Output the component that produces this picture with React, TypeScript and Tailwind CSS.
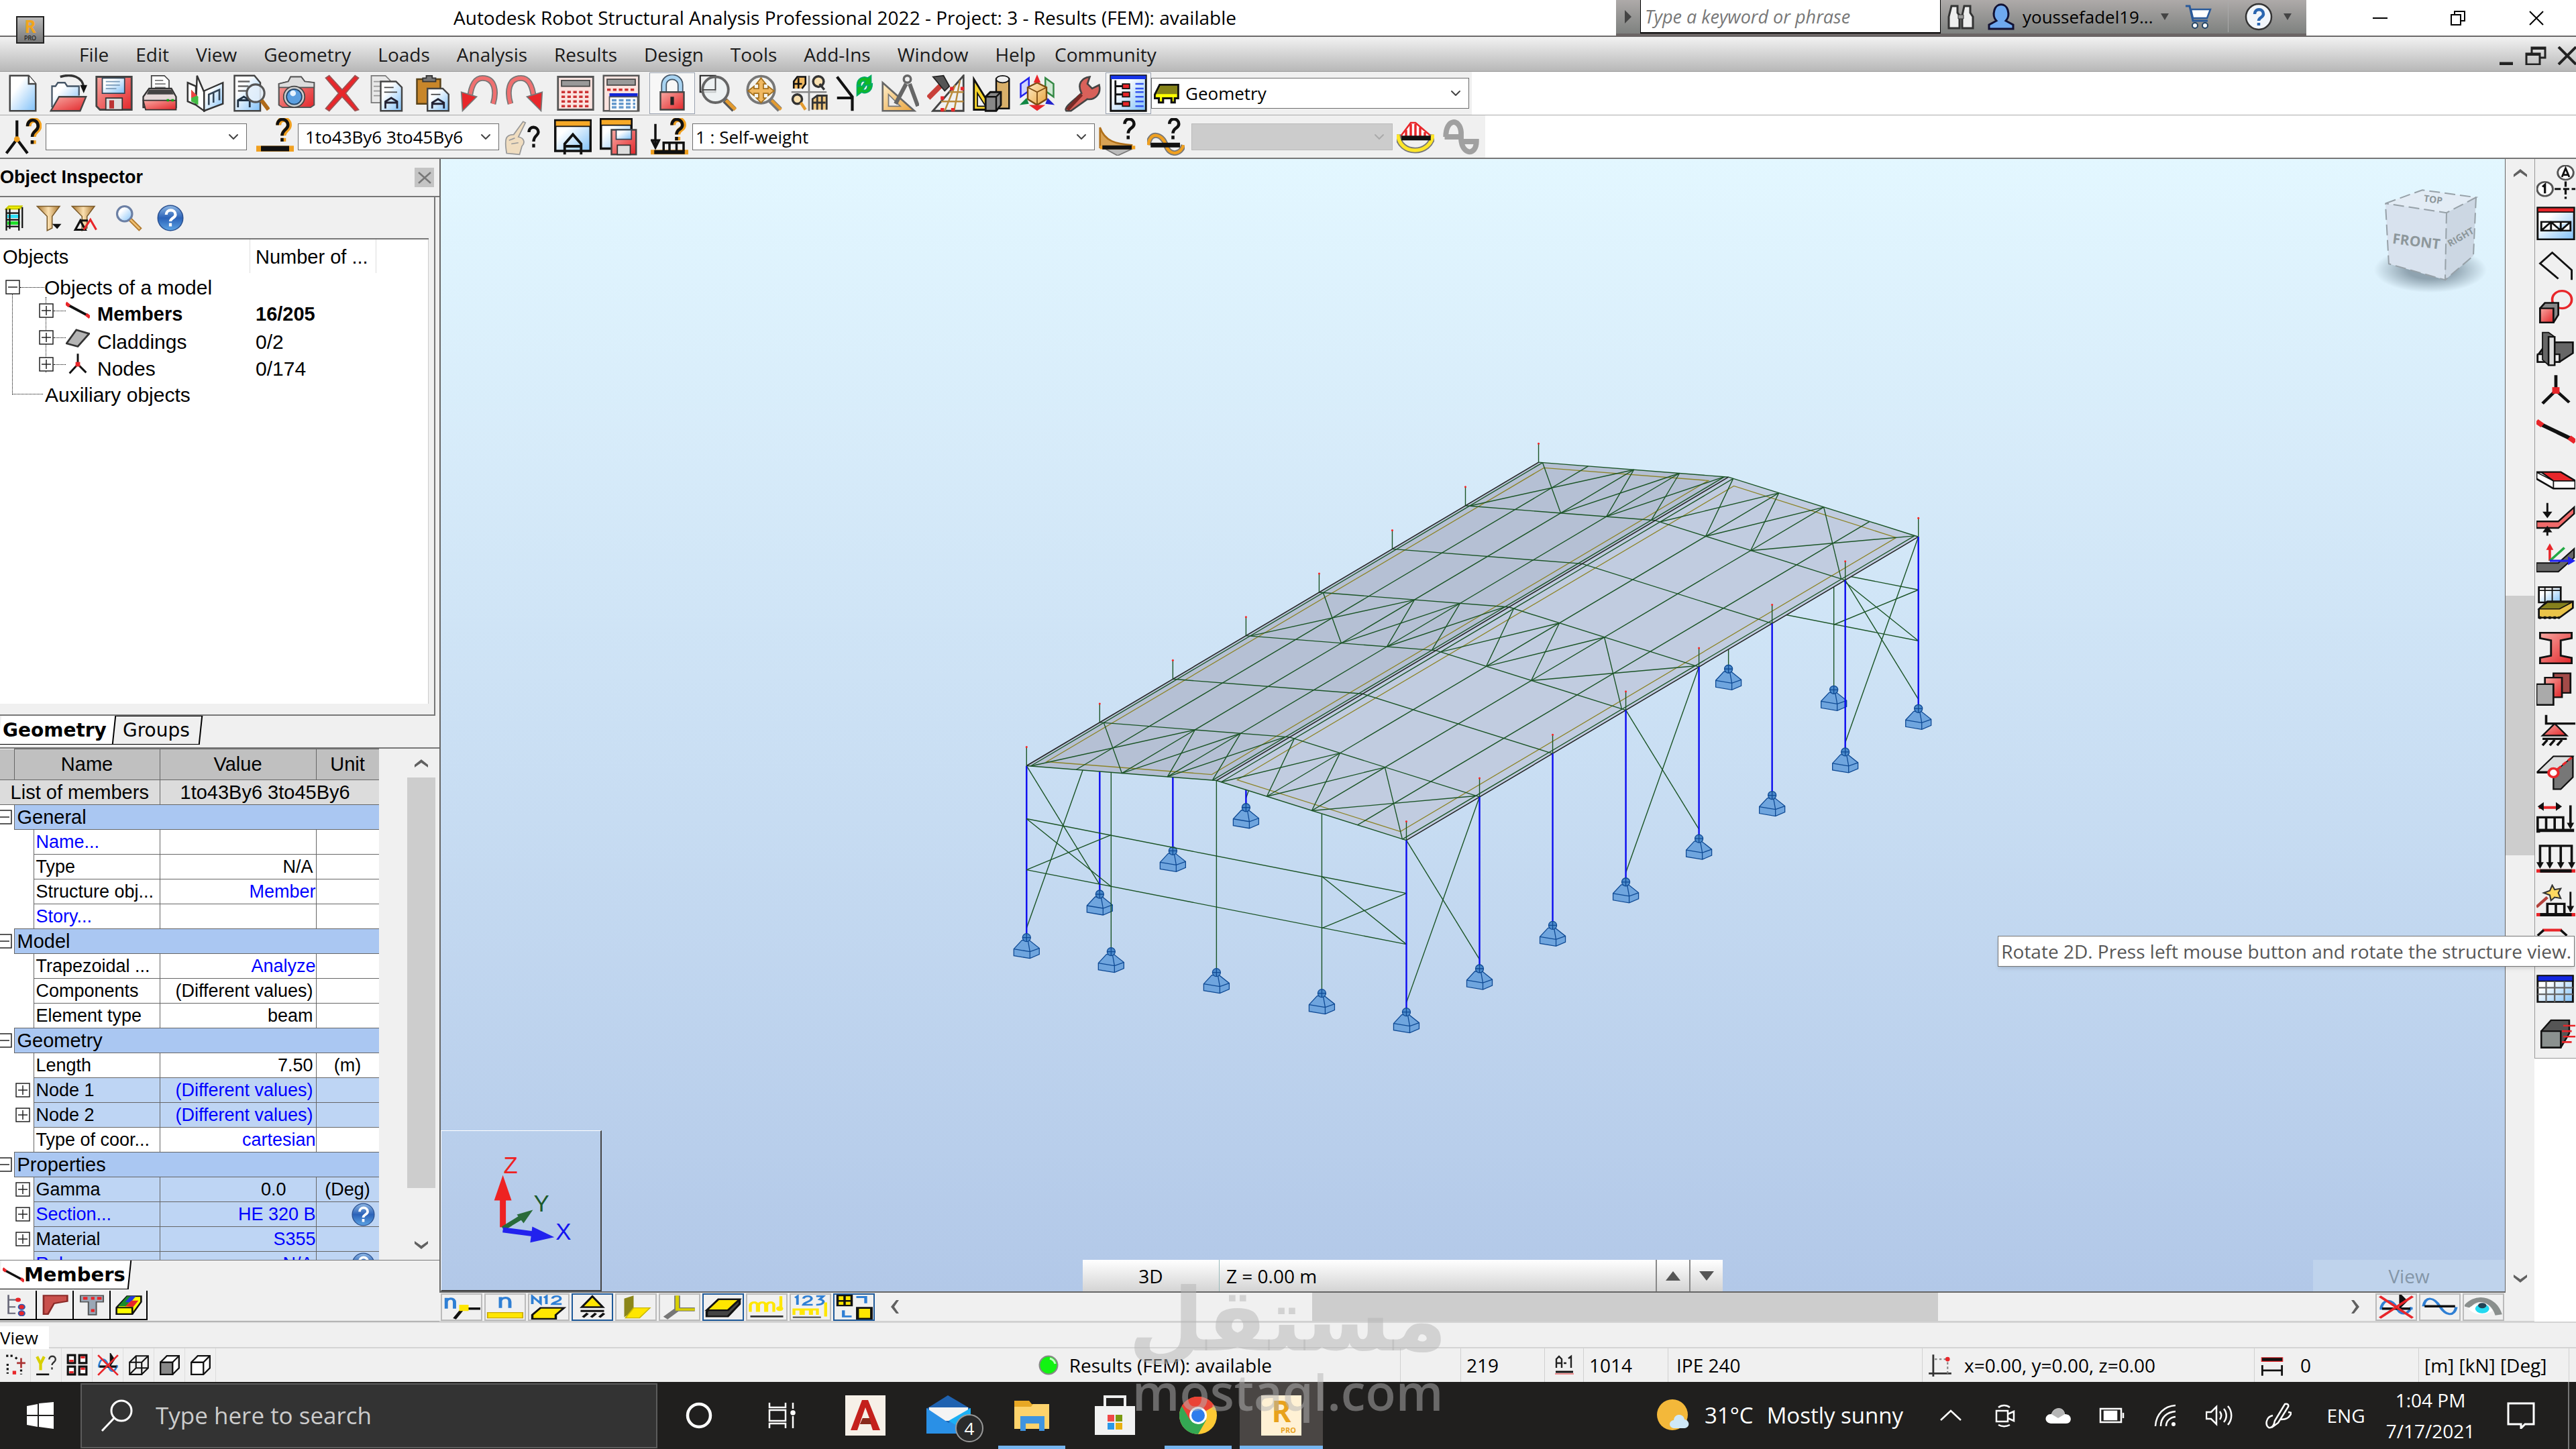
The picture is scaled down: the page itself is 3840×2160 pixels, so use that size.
import React from 'react';
import { ChevronDown } from 'lucide-react';

const K = '#111';
const R = '#e8262a';

const ICONS: Record<string, React.ReactNode> = {
  file: <><path d="M5 1h16l6 7v23H5z" fill="url(#gB)" stroke="#444" strokeWidth="1.4" /><path d="M21 1v7h6" fill="#fff" stroke="#444" strokeWidth="1.4" /></>,
  open: <><path d="M2 28V10h3l2-3h6l2 3h10v8" fill="url(#gB)" stroke="#456" strokeWidth="1.3" /><path d="M1 31l7-12h23l-5 12z" fill="url(#gR)" stroke="#444" strokeWidth="1.3" /><path d="M9 2c10-3 19 0 20 9" fill="none" stroke="#333" strokeWidth="2" /><path d="M26 9h6l-3 7z" fill="#111" /></>,
  save: <><path d="M1 2h30v28H4l-3-3z" fill="url(#gR)" stroke="#444" strokeWidth="1.6" /><path d="M6 3h19v13H6z" fill="url(#gB)" stroke="#345" /><path d="M9 6h12M9 9h12M9 12h9" stroke="#7a9ab8" /><path d="M9 20h14v10H9z" fill="#ddd" stroke="#333" /><path d="M12 22h4v7h-4z" fill="#b33" /></>,
  print: <><path d="M9 14V1h11l4 4v9z" fill="#fff" stroke="#444" /><path d="M12 5h7M12 8h9M12 11h9" stroke="#777" /><path d="M2 19l5-7h19l4 7v9H2z" fill="#e6dada" stroke="#333" strokeWidth="1.3" /><path d="M2 22h28v8H4z" fill="url(#gR)" stroke="#333" /><path d="M7 13h19l2 4H5z" fill="#444" /><path d="M22 22h2M26 22h2" stroke="#1a1" strokeWidth="2" /></>,
  book: <><path d="M1 7l7 3v16l-7-3zM8 26l1-25 6 14v16z" fill="#fff" stroke="#333" strokeWidth="1.4" /><path d="M15 14l16-7v18l-16 6z" fill="url(#gB)" stroke="#333" strokeWidth="1.4" /><path d="M4 13l6 6v7l-6-3z" fill="#4b4" /><path d="M4 13l5 5-5 2z" fill="#e44" /><path d="M19 26v-9l9-4v9M23 15v9" fill="none" stroke="#345" strokeWidth="1.5" /></>,
  preview: <><path d="M2 1h17l5 6v24H2z" fill="url(#gB)" stroke="#444" strokeWidth="1.4" /><path d="M5 6h10M5 10h9M5 14h8" stroke="#666" strokeWidth="1.3" /><path d="M5 28v-6l5-3 5 3v6M5 22h10" fill="none" stroke="#234" strokeWidth="1.6" /><circle cx="20" cy="16" r="7.5" fill="#e6f1fa" fillOpacity=".85" stroke="#555" strokeWidth="1.8" /><path d="M25 22l6 8" stroke="#b06a18" strokeWidth="3.4" /></>,
  camera: <><path d="M1 8l8-2 2-4h9l3 4 8 1v19l-3 2H4l-3-2z" fill="url(#gR)" stroke="#555" strokeWidth="1.2" /><path d="M1 8l8-2 2-4h9l3 4 8 1v4H1z" fill="#ddd" stroke="#555" /><circle cx="14" cy="19" r="9" fill="#ccc" stroke="#444" /><circle cx="14" cy="19" r="6.5" fill="#5b9fe0" stroke="#246" /><circle cx="13" cy="16" r="2.5" fill="#e8f4ff" /></>,
  del: <path d="M2 3l3-2 11 12L27 1l3 2-11 13 11 14-3 1-11-12L5 31l-3-2 11-13z" fill={R} stroke="#955" />,
  copy: <><path d="M2 1h12l4 4v19H2z" fill="#e8e8e8" stroke="#777" /><path d="M4 6h8M4 10h8M4 14h6M4 18h6" stroke="#999" /><path d="M10 6h13l5 5v20H10z" fill="url(#gB)" stroke="#444" strokeWidth="1.4" /><path d="M13 11h8M13 15h11" stroke="#444" /><path d="M14 29v-6l5-3 5 3v6M14 24h10" fill="none" stroke="#223" strokeWidth="1.6" /></>,
  paste: <><path d="M2 4h20v21H2z" fill="#c8862a" stroke="#5a4318" strokeWidth="1.4" /><path d="M7 6V3h3V1h5v2h3v3z" fill="#777" stroke="#333" /><path d="M11 12h13l5 5v14H11z" fill="url(#gB)" stroke="#444" strokeWidth="1.4" /><path d="M14 17h8" stroke="#444" /><path d="M15 29v-5l5-3 5 3v5M15 25h10" fill="none" stroke="#223" strokeWidth="1.6" /></>,
  undo: <><path d="M28 25c3-10 2-22-9-22C12 3 9 11 8 21" fill="none" stroke="#777" strokeWidth="5" /><path d="M28 25c3-10 2-22-9-22C12 3 9 11 8 21" fill="none" stroke="#f07070" strokeWidth="3" /><path d="M1 15l13 4L2 31z" fill={R} stroke="#777" /></>,
  redo: <><path d="M4 25C1 15 2 3 13 3c7 0 10 8 11 18" fill="none" stroke="#777" strokeWidth="5" /><path d="M4 25C1 15 2 3 13 3c7 0 10 8 11 18" fill="none" stroke="#f07070" strokeWidth="3" /><path d="M31 15l-13 4 12 12z" fill={R} stroke="#777" /></>,
  calc: <><path d="M1 2h30v28H1z" fill="#fbe3df" stroke="#555" strokeWidth="1.6" /><path d="M4 5h24v5H4z" fill="#999" stroke="#444" /><path d="M4 15h24M4 19h24M4 23h24M4 27h24" stroke="#c33" strokeWidth="2" strokeDasharray="3 2" /></>,
  calc2: <><path d="M1 1h30v30H1z" fill="#fbe3df" stroke="#555" strokeWidth="1.4" /><path d="M4 4h24v5H4z" fill="#999" stroke="#444" /><path d="M4 13h24" stroke="#c33" strokeWidth="2" strokeDasharray="3 2" /><path d="M6 16h24v3H6z" fill="#1226d8" /><path d="M6 19h24v12H6z" fill="#fff" stroke="#555" /><path d="M8 22h20M8 25h20M8 28h20" stroke="#69c" strokeWidth="2" strokeDasharray="4 2" /></>,
  lock: <><path d="M9 15V9c0-9 14-9 14 0v6" fill="none" stroke="#456" strokeWidth="5" /><path d="M9 15V9c0-9 14-9 14 0v6" fill="none" stroke="#a9d4f2" strokeWidth="3" /><path d="M6 15h20v15H6z" fill="url(#gR)" stroke="#444" strokeWidth="1.4" /><path d="M16 19v7" stroke="#222" strokeWidth="3" /></>,
  zoom: <><path d="M1 1h13v14H1z" fill="none" stroke="#222" strokeWidth="1.2" /><circle cx="14" cy="13" r="11" fill="#eef2f4" fillOpacity=".8" stroke="#666" strokeWidth="2.2" /><path d="M14 3v10H3" stroke="#444" fill="none" /><path d="M22 22l8 8" stroke="#555" strokeWidth="5" /><path d="M23 22l8 8" stroke="#e39b30" strokeWidth="3" /></>,
  pan: <><circle cx="14" cy="13" r="11.5" fill="#f4f4f0" stroke="#777" strokeWidth="2.2" /><path d="M14 3l4 5h-2v4h4v-2l5 4-5 4v-2h-4v4h2l-4 4-4-4h2v-4H8v2l-5-4 5-4v2h4V8h-2z" fill="#f0b860" stroke="#a4701c" /><path d="M22 22l8 8" stroke="#777" strokeWidth="5" /><path d="M23 22l8 8" stroke="#e39b30" strokeWidth="2.5" /></>,
  views: <><path d="M16 1v30M1 15h30" stroke="#888" strokeWidth="1.5" /><path d="M3 12V6l3-4h7v6l-3 4M3 8h7M7 3v9" fill="#f0b860" stroke={K} strokeWidth="1.5" /><circle cx="24" cy="6" r="4.500" fill="#f8e0b0" stroke="#333" strokeWidth="2" /><path d="M25 8l4 5" stroke="#333" strokeWidth="2" /><circle cx="6" cy="21" r="4" fill="#f8e0b0" stroke="#333" strokeWidth="2" /><path d="M9 24l4 6" stroke="#e39b30" strokeWidth="2.5" /><path d="M19 30V21l4-3h8v12M19 24h11M23 18v12M27 18v12" fill="#f0c880" stroke="#333" strokeWidth="1.600" /></>,
  redraw: <><path d="M1 2l13 17v12M1 20h13" fill="none" stroke={K} strokeWidth="2.4" /><path d="M18 9c0-6 6-8 9-6l3-2v8h-7l2-3c-2-1-4 0-4 3zM31 8c0 7-6 9-9 7l-4 3V10h7l-2 3c2 1 4 0 4-3z" fill="#12b824" stroke="#0a6" /></>,
  compass: <><path d="M1 7v24h27z" fill="url(#gY)" stroke="#666" strokeWidth="1.5" /><path d="M6 17v10h10z" fill="#eee" stroke="#777" /><circle cx="22" cy="4" r="3" fill="none" stroke="#666" strokeWidth="2" /><path d="M21 8L12 25M24 8l7 19" stroke="#666" strokeWidth="3.4" /></>,
  hammer: <><path d="M5 31L31 1v30z" fill="none" stroke="#444" strokeWidth="1.6" /><path d="M12 23h19M19 15h12M15 31l9-22M23 31l5-26" stroke="#b98a3a" strokeWidth="1.4" /><path d="M1 20L12 9" stroke="#c9403a" strokeWidth="4.5" /><path d="M5 2l9-1 5 9-4 4z" fill="#555" stroke="#222" /><path d="M12 19h2v2h-2zM20 11h2v2h-2zM29 11h2v2h-2zM12 29h2v2h-2zM21 29h2v2h-2z" fill={R} stroke={R} /></>,
  shapes: <><path d="M1 4l16 26H1z" fill="#f6d52c" stroke={K} strokeWidth="1.6" /><path d="M4 16l7 11H4z" fill="#f0f0f0" stroke={K} /><path d="M20 4v25h11V4z" fill="#d9b06a" stroke={K} strokeWidth="1.4" /><ellipse cx="25.500" cy="4" rx="5.500" ry="3" fill="#eee" stroke={K} /><path d="M11 19l4-4h9v11l-4 5h-9z" fill="#888" stroke={K} strokeWidth="1.6" /><path d="M11 19h9v12M20 19l4-4" fill="none" stroke={K} strokeWidth="1.4" /></>,
  cube: <><path d="M2 8l7-5v11l-7 5z" fill="#cfd4ff" stroke="#22e" strokeWidth="1.4" /><path d="M30 8l-7-5v11l7 5z" fill="#cfe8d4" stroke="#384" strokeWidth="1.4" /><path d="M8 11l8-4 8 4v10l-8 5-8-5z" fill="url(#gY)" stroke="#7a4b10" strokeWidth="1.4" /><path d="M8 11l8 4 8-4M16 15v11" fill="none" stroke="#7a4b10" /><path d="M16 0l3 7h-6zM9 26h14l-7 5z" fill={R} /><path d="M1 26l6-6 2 5z" fill="#184" /><path d="M31 26l-6-6-2 5z" fill="#22c" /></>,
  wrench: <><path d="M2 31c-3-3 9-11 13-15C11 8 15 3 22 2l-2 6 4 4 6-3c2 8-4 13-10 12L6 31z" fill="#d8615a" stroke="#444" strokeWidth="1.5" /><path d="M3 30l12-13" stroke="#7a2a26" strokeWidth="3" /></>,
  inspector: <><path d="M1 1h30v30H1z" fill="url(#gB)" stroke={K} strokeWidth="1.6" /><path d="M1 1h30v3H1z" fill="#1634e8" /><path d="M5 5v20h6M5 10h6M5 17h6" fill="none" stroke={K} strokeWidth="1.6" /><path d="M11 8h6v4h-6zM11 15h6v4h-6zM11 23h6v4h-6z" fill={R} stroke={K} /><path d="M22 8h7M22 12h7M22 15h7M22 19h7M22 23h7M22 27h7" stroke="#35e" strokeWidth="1.5" /></>,
  house: <><path d="M1 18L7 6h22v16h-4v5h-4v-5H11v5H6v-5H1z" fill="#ff0" stroke={K} strokeWidth="2.500" /><path d="M3 17L8 7h20v10z" fill="#86831a" /></>,
  nodeQ: <><path d="M11 2v16L2 30M11 18l9 12" fill="none" stroke={K} strokeWidth="2.4" /><circle cx="11" cy="18" r="2.500" fill="#f0a020" /><path d="M21 7c0-7 9-7 9 0 0 4-5 4-5 9M25 19v3" fill="none" stroke="#f0a020" strokeWidth="4.5" /><path d="M20 7c0-7 9-7 9 0 0 4-5 4-5 9M24 19v3" fill="none" stroke={K} strokeWidth="2.6" /></>,
  barQ: <><path d="M0 26h32" stroke="#f0a020" strokeWidth="5" /><path d="M4 26h24" stroke={K} strokeWidth="4.500" /><path d="M19 6c0-7 9-6 9 0 0 4-5 4-5 9M23 17v3" fill="none" stroke="#f0a020" strokeWidth="4.600" /><path d="M18 6c0-7 9-6 9 0 0 4-5 4-5 9M22 17v3" fill="none" stroke={K} strokeWidth="2.600" /></>,
  handQ: <><path d="M3 30c-2-12-1-16 6-16l8-11 2 1-6 12c5 1 6 5 3 8l-2 7z" fill="#f0ddc0" stroke="#999" /><path d="M5 19l5-2M7 22l6-1" stroke="#999" /><path d="M22 12c0-6 8-5 8 0 0 3-4 3-4 8M26 22v3" fill="none" stroke={K} strokeWidth="2.500" /></>,
  winArch: <><path d="M1 2h30v26H1z" fill="url(#gB)" stroke={K} strokeWidth="2" /><path d="M1 2h30v5H1z" fill="#f6a928" stroke={K} /><path d="M9 31v-9l7-8 7 8v9M9 24h14" fill="none" stroke={K} strokeWidth="2.200" /></>,
  winSave: <><path d="M1 1h26v25H1z" fill="url(#gB)" stroke={K} strokeWidth="2" /><path d="M1 1h26v5H1z" fill="#f6a928" stroke={K} /><path d="M10 10h21v21H10z" fill="url(#gR)" stroke="#444" strokeWidth="1.400" /><path d="M14 10h13v8H14z" fill="url(#gB)" stroke="#345" /><path d="M15 23h11v8H15z" fill="#ddd" stroke="#333" /></>,
  loadQ: <><path d="M0 29h32" stroke="#f0a020" strokeWidth="4" /><path d="M3 29h26" stroke={K} strokeWidth="3.500" /><path d="M4 5v20M1 19l3 6 3-6zM11 28v-7h17v7M16 21v7M22 21v7" fill="none" stroke={K} strokeWidth="2" /><path d="M19 6c0-7 9-6 9 0 0 4-5 3-5 8M23 16v3" fill="none" stroke="#f0a020" strokeWidth="4.500" /><path d="M18 6c0-7 9-6 9 0 0 4-5 3-5 8M22 16v3" fill="none" stroke={K} strokeWidth="2.600" /></>,
  momQ: <><path d="M1 25V8c4 12 14 14 27 15v3z" fill="#d9a253" stroke="#b0701a" strokeWidth="1.500" /><path d="M5 26h24l-13 6z" fill="#bbb" stroke="#777" /><path d="M1 25h30" stroke="#f0a020" strokeWidth="3" /><path d="M3 25h25" stroke={K} strokeWidth="3.500" /><path d="M22 5c0-6 8-5 8 0 0 4-5 3-5 8M25 15v3" fill="none" stroke={K} strokeWidth="2.600" /></>,
  waveQ: <><path d="M1 23c1-12 12-10 15 0s13 8 15 0" fill="none" stroke="#777" strokeWidth="4.500" /><path d="M1 23c1-12 12-10 15 0s13 8 15 0" fill="none" stroke="#f0a020" strokeWidth="2.500" /><path d="M3 23h25" stroke={K} strokeWidth="4" /><path d="M19 5c0-6 8-5 8 0 0 4-5 3-5 8M22 15v3" fill="none" stroke={K} strokeWidth="2.600" /></>,
  diagram: <><path d="M3 16l9-12h4l14 12z" fill="#fff" stroke={R} strokeWidth="1.500" /><path d="M8 10v6M12 5v11M16 5v11M20 8v8M24 12v4" stroke={R} strokeWidth="2" /><path d="M1 14c1 18 28 18 30 0" fill="none" stroke="#777" strokeWidth="5" /><path d="M1 14c1 18 28 18 30 0" fill="none" stroke="#ffe628" strokeWidth="3" /><path d="M4 17h25" stroke={K} strokeWidth="4" /></>,
  waveOff: <path d="M2 16h12M3 16C3 0 15 0 16 12v6c1 14 13 14 13 2H18" fill="none" stroke="#a0a0a0" strokeWidth="4.500" />,
  // side toolbar
  axes: <><circle cx="7" cy="22" r="6.500" fill="#fff" stroke="#555" strokeWidth="1.600" /><path d="M5 20l2-2v8" fill="none" stroke={K} strokeWidth="1.800" /><circle cx="24" cy="7" r="6.500" fill="#fff" stroke="#555" strokeWidth="1.600" /><path d="M21 11l3-8 3 8M22 9h4" fill="none" stroke={K} strokeWidth="1.600" /><path d="M15 22h17M24 15v16" stroke={K} strokeWidth="1.800" strokeDasharray="5 2" /></>,
  truss: <><path d="M1 1h30v29H1z" fill="url(#gB)" stroke={K} strokeWidth="1.600" /><path d="M1 1h30v4H1z" fill={R} stroke={K} /><path d="M4 14h24v8H4zM12 14v8M20 14v8M4 22l8-8 8 8 8-8" fill="#fff" stroke={K} strokeWidth="1.600" /></>,
  poly: <path d="M18 28L3 14 13 4l16 16v9" fill="none" stroke={K} strokeWidth="1.600" />,
  redCube: <><ellipse cx="21" cy="9" rx="8" ry="8" fill="none" stroke={R} strokeWidth="2" /><path d="M3 17l4-5h11v11l-4 7H3z" fill="#888" stroke={K} strokeWidth="1.500" /><path d="M3 17h11v13H3z" fill="url(#gR)" stroke={K} strokeWidth="1.500" /></>,
  column: <><path d="M1 22l8-12h21v10L19 28H1z" fill="#666" stroke={K} strokeWidth="1.500" /><path d="M1 21h18v7H1z" fill="#eee" stroke={K} strokeWidth="1.400" /><path d="M5 1h5l5 4v26h-5l-5-5z" fill="#666" stroke={K} /><path d="M10 5h5v26h-5z" fill="#ddd" stroke={K} strokeWidth="1.400" /></>,
  node: <><path d="M16 2v14L5 28M16 16l11 11" fill="none" stroke={K} strokeWidth="2.600" /><path d="M13 13h6v6h-6z" fill={R} /></>,
  bar: <><path d="M2 8l28 15" stroke={K} strokeWidth="3.500" /><path d="M0 6l5 4M27 21l5 4" stroke={R} strokeWidth="4.500" /></>,
  slab: <><path d="M0 11h20l12 8v7H14L0 17z" fill="#fff" stroke={K} strokeWidth="1.600" /><path d="M4 11h16l12 8H14z" fill={R} stroke={K} strokeWidth="1.200" /><path d="M0 11l14 8v7" fill="none" stroke={K} /></>,
  thick: <><path d="M0 18h18L31 5v6L18 24H0z" fill="#f06a6a" stroke={K} strokeWidth="1.400" /><path d="M9 1v12M9 31v-7" stroke={K} strokeWidth="1.600" /><path d="M5 9h8l-4 6zM5 28h8l-4-6z" fill={K} /></>,
  slabAxes: <><path d="M0 18h18L31 5v8L18 26H0z" fill="#666" stroke={K} strokeWidth="1.200" /><path d="M11 16V3" stroke={R} strokeWidth="2" /><path d="M8 6l3-6 3 6z" fill={R} /><path d="M11 16L23 4" stroke="#2a4" strokeWidth="2" /><path d="M11 16h17" stroke="#22e" strokeWidth="2" /><path d="M26 12l6 4-6 4z" fill="#22e" /></>,
  panel: <><path d="M2 2h18v14H2z" fill="url(#gB)" stroke={K} strokeWidth="1.500" /><path d="M7 2v14M13 2v14M2 5h18" stroke={K} /><path d="M2 22l7-7h21v6L19 30H2z" fill="#e9c349" stroke={K} strokeWidth="1.500" /><path d="M2 22l7-6h20l-10 6z" fill="#85801c" stroke={K} /><path d="M2 30h17" stroke={K} strokeWidth="2.500" strokeDasharray="2 2" /></>,
  beam: <path d="M3 2h26v5l-9 2v14l9 2v5H3v-5l9-2V9L3 7z" fill="url(#gR)" stroke={K} strokeWidth="1.600" />,
  stack: <><path d="M14 1h14v18H14z" fill="#a34a48" stroke={K} strokeWidth="1.500" /><path d="M7 5h14v18H7z" fill="url(#gR)" stroke={K} strokeWidth="1.500" /><path d="M0 11h14v19H0z" fill="#aaa" stroke={K} strokeWidth="1.500" /></>,
  support: <><path d="M8 1v8h24" fill="none" stroke={K} strokeWidth="2" /><path d="M15 9l10 11H5z" fill="url(#gR)" stroke={K} strokeWidth="1.400" /><path d="M5 23h20M5 29l4-5M11 29l4-5M17 29l4-5" stroke={K} strokeWidth="2" /></>,
  release: <><path d="M1 15L14 1h16v19L20 31h-6V16H1z" fill="#777" stroke={K} strokeWidth="1.300" /><path d="M1 15L14 1h16L15 15z" fill="#ddd" stroke={K} /><path d="M29 2L16 14" stroke={R} strokeWidth="2" strokeDasharray="4 2" /><circle cx="14" cy="16" r="4" fill="#fff" stroke={R} strokeWidth="2.200" /></>,
  load1: <><path d="M2 6h17" stroke={R} strokeWidth="2.500" /><path d="M1 5l5-4v8zM21 5l-5-4v8z" fill={K} /><path d="M1 27V15h21v12M8 15v12M15 15v12" fill="none" stroke={K} strokeWidth="2" /><path d="M0 27h31" stroke={K} strokeWidth="3" /><path d="M28 4v20" stroke={K} strokeWidth="2" /><path d="M25 20h6l-3 6zM0 26h3v3H0z" fill={K} /></>,
  load2: <><path d="M3 22V3h26v19M11 3v19M20 3v19" fill="none" stroke={K} strokeWidth="2" /><path d="M0 18h6l-3 6zM8 18h6l-3 6zM17 18h6l-3 6zM26 18h6l-3 6z" fill={K} /><path d="M0 26h32" stroke={R} strokeWidth="3" /><path d="M3 26h26" stroke={K} strokeWidth="3" /></>,
  wizard: <><path d="M0 21l9-9" stroke="#b4423c" strokeWidth="2.500" /><path d="M13 1l2 4 5-1-2 4 2 5-5-1-3 3-1-5-5-2 5-2z" fill="#ffd860" stroke="#333" strokeWidth="1.200" /><path d="M9 27V18h14v9M16 18v9" fill="none" stroke={K} strokeWidth="2" /><path d="M0 28h32" stroke={R} strokeWidth="3" /><path d="M3 28h26" stroke={K} strokeWidth="3" /><path d="M28 7v18" stroke={K} strokeWidth="1.600" /><path d="M25 20h6l-3 6z" fill={K} /></>,
  comb: <><path d="M5 4h16" stroke={R} strokeWidth="2.500" /><path d="M1 9l5-5M20 4l5 5" stroke={K} strokeWidth="2" /></>,
  table: <><path d="M1 4h29v24H1z" fill="url(#gB)" stroke={K} strokeWidth="1.600" /><path d="M1 4h29v5H1z" fill="#1226e0" stroke={K} /><path d="M1 15h29M1 21h29M8 9v19M15 9v19M23 9v19" stroke="#666" strokeWidth="1.300" /></>,
  solid: <><path d="M4 13L12 3h15v12L20 28H4z" fill="#555" stroke={K} strokeWidth="1.400" /><path d="M4 13h16v15H4z" fill="#8b918f" stroke={K} strokeWidth="1.400" /><path d="M22 8h10M21 13h8M22 18h10M21 23h8" stroke={R} strokeWidth="1.600" /></>,
  // inspector strip
  shelf: <><path d="M6 5l3-3h15l-2 3z" fill="#ff0" stroke="#cc0" strokeWidth="2" /><path d="M7 12h15v4H7z" fill="#2ee0f8" /><path d="M7 20h15v4H7z" fill="#1ee02a" /><path d="M6 5v26M10 5v24M21 5v26M25 3v25M6 10h15M6 18h15M6 26h15" stroke={K} strokeWidth="1.800" fill="none" /></>,
  filter: <><path d="M1 2h27l-9 12v14l-6 3V14z" fill="url(#gW)" stroke="#7a5a2a" strokeWidth="1.200" /><path d="M19 23h11l-5 6z" fill={K} /></>,
  filter2: <><path d="M1 2h27l-9 12v14l-6 3V14z" fill="url(#gW)" stroke="#7a5a2a" strokeWidth="1.200" /><path d="M5 30l6-11 6 11zM11 19h9" fill="none" stroke={K} strokeWidth="2.500" /><path d="M15 30l8-12 7 12" fill="none" stroke={R} strokeWidth="2.500" /></>,
  find: <><circle cx="11" cy="11" r="9" fill="url(#gB)" stroke="#6b7fa4" strokeWidth="2.500" /><path d="M18 18l12 12" stroke="#b07a30" strokeWidth="5" /><path d="M18 18l11 11" stroke="#f0c070" strokeWidth="2" /></>,
  help: <><circle cx="16" cy="16" r="15" fill="url(#gQ)" stroke="#2a5090" strokeWidth="1.200" /><path d="M11 12c0-7 11-7 11 0 0 4-6 4-6 8M16 22v4" fill="none" stroke="#fff" strokeWidth="3.400" /></>,
  clad: <path d="M1 24L14 6l17 5-15 17z" fill="#b4b4b4" stroke="#333" strokeWidth="2.400" />,
  tree: <><path d="M5 2v26h8M5 9h10M5 19h8" fill="none" stroke="#667" strokeWidth="2" /><circle cx="16" cy="9" r="3" fill={R} /><circle cx="20" cy="19" r="3.500" fill={R} stroke="#35a" strokeWidth="1.500" /><circle cx="20" cy="28" r="3.500" fill={R} stroke="#35a" strokeWidth="1.500" /></>,
  corner: <path d="M3 3h27v8L15 14 8 29H3z" fill="#c9504c" stroke="#8a2a28" strokeWidth="2" />,
  tee: <><path d="M3 3h26v9h-8v18h-9V12H3z" fill="#9aa7b5" stroke="#555" strokeWidth="1.500" /><path d="M6 7h5M15 7h4M22 7h5M15 24h4" stroke={R} strokeWidth="4" /></>,
  slabs: <><path d="M2 20L14 4h16v8L20 29H2z" fill="#ff0" stroke={K} strokeWidth="2" /><path d="M4 18L14 4h8l-9 14z" fill="#1a8a2a" /><path d="M12 12l6-8h6l-6 9z" fill="#2438e0" /><path d="M12 18l7-8h8l-6 9z" fill={R} /><path d="M2 20h18v9" fill="none" stroke={K} strokeWidth="2" /></>,
  // display toggles
  nNode: <><path d="M16 18h16M16 20l-6 11" stroke={K} strokeWidth="3" /><path d="M14 13h8v8h-8z" fill="#ffe600" /><path d="M3 18V4M3 9c1-5 7-6 7 1v8" fill="none" stroke="#2f7fd4" strokeWidth="2.800" /></>,
  nBar: <><path d="M1 23h30v7H1z" fill="#ffe600" stroke="#c9a800" /><path d="M12 17V3M12 8c1-5 8-6 8 1v8" fill="none" stroke="#2f7fd4" strokeWidth="2.800" /></>,
  n12: <><path d="M2 12V2l7 9V2M12 4l2-2v10M19 5c1-4 7-4 7 0s-6 4-7 7h8" fill="none" stroke="#2f7fd4" strokeWidth="2.200" /><path d="M2 26l7-9h20l-7 9v5H2z" fill="#ffe600" stroke={K} strokeWidth="2" /></>,
  tri: <><path d="M16 2l9 14H7z" fill="#ffe600" stroke={K} strokeWidth="2" /><path d="M6 21h20M8 29l4-5M15 29l4-5M22 29l4-5" stroke={K} strokeWidth="2.500" /></>,
  ell: <><path d="M6 5l8-4v20l-8 8z" fill="#8b861a" /><path d="M7 30l7-13h14l-9 13z" fill="#ffe600" stroke="#c9b800" /></>,
  local: <><path d="M14 1v18L4 30M14 19h15" fill="none" stroke="#777" strokeWidth="5" /><path d="M14 1v18h15" fill="none" stroke="#d8d000" strokeWidth="3" /></>,
  plate: <><path d="M2 22L12 6h18v6L20 28H2z" fill="#444" stroke={K} strokeWidth="2" /><path d="M2 20L12 6h18L20 20z" fill="#ffe600" stroke={K} strokeWidth="2" /></>,
  loads: <><path d="M2 22v-9c1-4 6-4 6 0v9M9 22v-9c1-4 6-4 6 0v9M16 22v-9c1-4 6-4 6 0v9M28 2v18" fill="none" stroke="#ffe600" strokeWidth="2.500" /><path d="M2 28h28" stroke="#333" strokeWidth="2.500" /><circle cx="27" cy="18" r="3" fill="#ffe600" /></>,
  n123: <><path d="M3 4l2-2v11M10 5c1-4 7-4 7 0s-6 4-7 8h8M21 2h6l-3 4c5 1 4 7-3 7" fill="none" stroke="#2f7fd4" strokeWidth="2.200" /><path d="M2 26v-7h6v7M10 26v-7h6v7M17 26v-7h5v7M29 10v18" fill="none" stroke="#ffe600" strokeWidth="2.500" /><path d="M1 29h24" stroke="#555" strokeWidth="2" /></>,
  swap: <><path d="M2 1h12v13H2z" fill="#ffe600" stroke={K} strokeWidth="2" /><path d="M8 1v13M2 8h12" stroke={K} strokeWidth="2" /><path d="M19 17h12v14H19z" fill="#ffe600" stroke={K} strokeWidth="2.500" /><path d="M18 3h8v8M14 28H7v-8" fill="none" stroke="#2f7fd4" strokeWidth="2.500" /></>,
  crossWave: <><path d="M3 18c2-14 10-12 13-2s9 12 13 0M2 18h28" fill="none" stroke="#2f7fd4" strokeWidth="2.500" /><path d="M4 18h24M20 2l4 6-4 6z" stroke={K} strokeWidth="3" /><path d="M2 2l28 28M30 2L2 30" stroke={R} strokeWidth="2.600" /></>,
  wave: <><path d="M2 15c2-14 9-12 14 0s12 14 14 1" fill="none" stroke="#2f7fd4" strokeWidth="2.500" /><path d="M3 15h26" stroke={K} strokeWidth="3" /></>,
  eye: <><path d="M2 16C8 2 24 2 29 26" fill="none" stroke="#8a8f8d" strokeWidth="6" /><path d="M3 18c5-8 15-8 21 2-6 7-15 8-21-2z" fill="#fff" /><circle cx="15" cy="18" r="6" fill="#23d9f0" /><circle cx="15" cy="14" r="3.500" fill="#245" /></>,
  // status bar
  snap: <><path d="M3 3h10M16 5l4 4M5 14v14M24 22v7" stroke={K} strokeWidth="3" strokeDasharray="3 3" /><path d="M24 6v14M18 13h12" stroke="#a33" strokeWidth="2.500" /><path d="M12 24h5v5h-5z" fill={R} /></>,
  vQ: <><path d="M3 4l5 10 5-10M8 14v9" stroke="#d8d000" strokeWidth="4" fill="none" /><path d="M2 29h18" stroke={K} strokeWidth="2.500" /><path d="M20 8c0-6 9-6 9 0 0 4-5 4-5 8M24 19v3" fill="none" stroke="#333" strokeWidth="2.200" /></>,
  four: <><path d="M3 2h10v11H3zM19 2h10v11H19zM3 18h10v11H3zM19 18h10v11H19z" fill="#fff" stroke={K} strokeWidth="3" /><path d="M5 10h6M21 5h6M5 26h6M21 21h6" stroke={R} strokeWidth="3" /></>,
  wire: <path d="M3 12h17v17H3zM3 12l9-9h17v17l-9 9M20 12l9-9M12 3v17h17M12 20l-9 9" fill="none" stroke={K} strokeWidth="2" />,
  shade: <><path d="M3 12l9-9h17v17l-9 9H3z" fill="#fff" stroke={K} strokeWidth="2.200" /><path d="M3 12h17v17H3z" fill="#888" stroke={K} strokeWidth="2.200" /><path d="M20 12l9-9" stroke={K} strokeWidth="2" /></>,
  white: <><path d="M3 12l9-9h17v17l-9 9H3z" fill="#fff" stroke={K} strokeWidth="2.200" /><path d="M3 12h17v17M20 12l9-9" fill="none" stroke={K} strokeWidth="2.200" /></>,
  a1: <><path d="M4 20V7l4-4 4 4v13M4 13h8M15 13h4M22 6l4-3v17" fill="none" stroke="#222" strokeWidth="2.400" /><path d="M3 26h26" stroke={K} strokeWidth="3" /><path d="M2 29h28" stroke={R} /></>,
  coord: <><path d="M7 2v29M1 27h30" stroke="#333" strokeWidth="2.500" /><path d="M9 8h15M26 12v15" stroke="#888" strokeWidth="2" strokeDasharray="3 3" /><circle cx="26" cy="8" r="3" fill={R} /></>,
  dim: <><path d="M2 6h28v5H2z" fill={K} stroke={R} /><path d="M3 16v14M29 16v14M3 23h26" stroke={K} strokeWidth="2.500" /></>,
};

function Ic({ n, c = 'w-14 h-14', fill = false }: { n: string; c?: string; fill?: boolean }) {
  return <svg viewBox="0 0 32 32" preserveAspectRatio={fill ? 'none' : 'xMidYMid'} className={`shrink-0 ${c}`}>{ICONS[n]}</svg>;
}

function Tool({ n, on = false }: { n: string; on?: boolean }) {
  return (
    <button aria-label={n} className={`w-[68px] h-[62px] shrink-0 flex items-center justify-center ${on ? 'border border-gray-400 bg-[#f7f7f7]' : ''}`}>
      <Ic n={n} />
    </button>
  );
}

function Combo({ label, value, w, off = false, pl = 'pl-3', h = 'h-[40px]' }: { label: string; value: string; w: string; off?: boolean; pl?: string; h?: string }) {
  return (
    <div className={`relative flex items-center shrink-0 ${w} ${h}`}>
      <select aria-label={label} disabled={off} className={`appearance-none w-full h-full border text-[26px] text-black ${pl} ${off ? 'bg-[#ccc] border-[#bbb]' : 'bg-white border-[#6d6d6d]'}`}>
        <option>{value}</option>
      </select>
      <ChevronDown className={`absolute right-2 w-6 h-6 pointer-events-none ${off ? 'text-[#aaa]' : 'text-[#444]'}`} strokeWidth={2} />
    </div>
  );
}

function Chevron({ c }: { c: string }) {
  return <svg viewBox="0 0 20 12" className={`w-[20px] h-[12px] ${c}`}><path d="M0 12V8l10-8 10 8v4L10 5z" fill="#606060" /></svg>;
}

const MENU = ['File', 'Edit', 'View', 'Geometry', 'Loads', 'Analysis', 'Results', 'Design', 'Tools', 'Add-Ins', 'Window'];

function TitleBar() {
  return (
    <header className="relative shrink-0">
      <div className="h-[55px] bg-white border-b-2 border-[#6b6969] flex">
        <h1 className="pl-[676px] text-[28px] leading-[52px] text-black whitespace-nowrap">Autodesk Robot Structural Analysis Professional 2022 - Project: 3 - Results (FEM): available</h1>
        <div className="ml-auto w-[1029px] h-[54px] border-b-4 border-[#6b6565] bg-linear-to-b from-[#aeaaa9] to-[#7e817f] flex items-center shrink-0">
          <button aria-label="Collapse" className="w-[36px] flex justify-center text-[#444]">
            <svg viewBox="0 0 10 20" className="w-[10px] h-[20px]"><path d="M0 0l10 10L0 20z" fill="#444" /></svg>
          </button>
          <input aria-label="Search help" placeholder="Type a keyword or phrase" className="w-[448px] h-[50px] bg-white border-x border-b-2 border-black px-1.5 italic text-[27px] placeholder:text-[#777]" />
          <button aria-label="Search" className="ml-2.5">
            <svg viewBox="0 0 40 38" className="w-10 h-[38px]"><path d="M6 3h9v10l3 4v19H2V19zM25 3h9v10l4 6v17H22V17z" fill="#eee" stroke="#333" strokeWidth="3" /><path d="M16 16h8v6h-8z" fill="#999" stroke="#333" /></svg>
          </button>
          <button className="ml-5 flex items-center gap-3 text-[26px] text-black">
            <svg viewBox="0 0 40 40" className="w-10 h-10"><path d="M13 26c-3-3-5-9-3-16C13-1 27-1 30 10c2 7 0 13-3 16l11 6v6H2v-6z" fill="#6ea8ef" stroke="#113" strokeWidth="3" /></svg>
            youssefadel19...
            <svg viewBox="0 0 12 10" className="w-3 h-[10px]"><path d="M0 0h12L6 10z" fill="#444" /></svg>
          </button>
          <button aria-label="Store" className="ml-6">
            <svg viewBox="0 0 40 38" className="w-10 h-[38px]"><path d="M1 3h6l5 22h22" fill="none" stroke="#2a5a9a" strokeWidth="3" /><path d="M9 8h29l-5 13H12z" fill="#fff" stroke="#2a5a9a" strokeWidth="2.500" /><circle cx="15" cy="32" r="4" fill="#fff" stroke="#246" strokeWidth="2" /><circle cx="30" cy="32" r="4" fill="#fff" stroke="#246" strokeWidth="2" /></svg>
          </button>
          <button aria-label="Help" className="ml-6 pl-6 h-[46px] border-l border-[#aaa] flex items-center gap-4">
            <svg viewBox="0 0 42 42" className="w-[42px] h-[42px]"><circle cx="21" cy="21" r="19" fill="#f2f6fa" stroke="#333" strokeWidth="2.500" /><path d="M15 17c0-9 13-9 13 0 0 5-7 5-7 10M21 30v4" fill="none" stroke="#2a66b0" strokeWidth="4.500" /></svg>
            <svg viewBox="0 0 12 10" className="w-3 h-[10px]"><path d="M0 0h12L6 10z" fill="#444" /></svg>
          </button>
        </div>
        <div className="w-[402px] shrink-0 flex items-center pl-[52px]">
          <button aria-label="Minimize" className="w-[116px] flex justify-center"><svg viewBox="0 0 22 22" className="w-[22px] h-[22px]"><path d="M0 11h22" stroke="#000" strokeWidth="2" /></svg></button>
          <button aria-label="Restore" className="w-[116px] flex justify-center"><svg viewBox="0 0 22 22" className="w-[22px] h-[22px]"><path d="M1 6h14v15H1zM6 6V1h15v14h-6" fill="none" stroke="#000" strokeWidth="2" /></svg></button>
          <button aria-label="Close" className="w-[118px] flex justify-center"><svg viewBox="0 0 22 22" className="w-[22px] h-[22px]"><path d="M1 1l20 20M21 1L1 21" stroke="#000" strokeWidth="2" /></svg></button>
        </div>
      </div>
      <nav className="h-[52px] bg-linear-to-b from-[#f2f2f2] to-[#b8b8b8] border-b border-[#999] flex items-center pl-[118px] gap-10 text-[28px] text-[#1a1a1a]">
        {MENU.map((m) => <button key={m}>{m}</button>)}
        <div className="flex gap-7">
          <button>Help</button>
          <button>Community</button>
        </div>
        <div className="ml-auto flex items-end gap-4 h-[32px]">
          <svg viewBox="0 0 22 26" className="w-[22px] h-[26px]"><path d="M0 24h20" stroke="#222" strokeWidth="5" /></svg>
          <svg viewBox="0 0 32 28" className="w-8 h-7"><path d="M2 11h20v16H2zM10 11V2h20v15h-8" fill="none" stroke="#222" strokeWidth="3" /><path d="M10 3h20M2 12h20" stroke="#222" strokeWidth="4" /></svg>
          <svg viewBox="0 0 28 28" className="w-7 h-7"><path d="M2 1l26 26M28 1L2 27" stroke="#222" strokeWidth="4" /></svg>
        </div>
      </nav>
      <button aria-label="Application menu" className="absolute left-6 top-6 w-[42px] h-[41px] border-2 border-[#222] bg-linear-to-b from-[#bbb] to-[#777] flex flex-col items-center">
        <span className="text-[26px] leading-[26px] font-bold text-[#f0a51e]">R</span>
        <span className="text-[9px] leading-[10px] text-black">PRO</span>
      </button>
    </header>
  );
}

function Toolbars() {
  return (
    <div className="shrink-0 bg-white">
      <div className="h-[65px] flex border-b border-[#aaa]">
        <div className="w-[2194px] h-full bg-[#f0f0f0] flex items-center">
          {['file', 'open', 'save', 'print', 'book', 'preview', 'camera', 'del', 'copy', 'paste', 'undo', 'redo'].map((n) => <Tool key={n} n={n} />)}
          <div className="flex ml-2">{['calc', 'calc2'].map((n) => <Tool key={n} n={n} />)}</div>
          <div className="flex ml-2">
            <Tool n="lock" on />
            {['zoom', 'pan', 'views', 'redraw', 'compass', 'hammer', 'shapes', 'cube', 'wrench'].map((n) => <Tool key={n} n={n} />)}
          </div>
          <Tool n="inspector" on />
          <div className="relative flex items-center">
            <Combo label="Layout" value="Geometry" w="w-[474px]" pl="pl-[50px]" h="h-[46px]" />
            <Ic n="house" c="w-10 h-10 absolute left-1" />
          </div>
        </div>
      </div>
      <div className="h-[65px] flex border-b-2 border-[#777]">
        <div className="w-[2214px] h-full bg-[#f0f0f0] flex items-center">
          <Tool n="nodeQ" />
          <Combo label="Node selection" value="" w="w-[300px]" />
          <div className="pl-2 flex items-center"><Tool n="barQ" /></div>
          <Combo label="Bar selection" value="1to43By6 3to45By6" w="w-[300px]" pl="pl-2.5" />
          <Tool n="handQ" />
          <div className="flex pl-2"><Tool n="winArch" /><Tool n="winSave" /></div>
          <div className="flex pl-2"><Tool n="loadQ" /></div>
          <Combo label="Load case" value="1 : Self-weight" w="w-[600px]" pl="pl-1" />
          <Tool n="momQ" />
          <div className="px-1"><Tool n="waveQ" /></div>
          <Combo label="Mode" value="" w="w-[300px]" off />
          <Tool n="diagram" /><Tool n="waveOff" />
        </div>
      </div>
    </div>
  );
}

function Box({ plus }: { plus?: boolean }) {
  return (
    <svg viewBox="0 0 22 22" className="w-[22px] h-[22px] shrink-0">
      <path d="M1 1h20v20H1z" fill="#fff" stroke="#222" strokeWidth="1.500" />
      <path d={plus ? 'M4 11h14M11 4v14' : 'M4 11h14'} stroke="#222" strokeWidth="1.500" />
    </svg>
  );
}

const TREE = [
  { icon: 'bar', name: 'Members', num: '16/205', bold: true },
  { icon: 'clad', name: 'Claddings', num: '0/2' },
  { icon: 'node', name: 'Nodes', num: '0/174' },
];

type Row = { cat?: string; name?: string; val?: string; unit?: string; plus?: boolean; link?: boolean; blue?: boolean; tint?: boolean; help?: boolean; flush?: boolean };

const ROWS: Row[] = [
  { cat: 'General' },
  { name: 'Name...', link: true },
  { name: 'Type', val: 'N/A' },
  { name: 'Structure obj...', val: 'Member', blue: true, flush: true },
  { name: 'Story...', link: true },
  { cat: 'Model' },
  { name: 'Trapezoidal ...', val: 'Analyze', blue: true, flush: true },
  { name: 'Components', val: '(Different values)' },
  { name: 'Element type', val: 'beam' },
  { cat: 'Geometry' },
  { name: 'Length', val: '7.50', unit: '(m)' },
  { name: 'Node 1', val: '(Different values)', blue: true, tint: true, plus: true },
  { name: 'Node 2', val: '(Different values)', blue: true, tint: true, plus: true },
  { name: 'Type of coor...', val: 'cartesian', blue: true, flush: true },
  { cat: 'Properties' },
  { name: 'Gamma', val: '0.0', unit: '(Deg)', tint: true, plus: true },
  { name: 'Section...', link: true, val: 'HE 320 B', blue: true, tint: true, plus: true, help: true, flush: true },
  { name: 'Material', val: 'S355', blue: true, tint: true, plus: true, flush: true },
  { name: 'Releases...', link: true, val: 'N/A', blue: true, tint: true, help: true },
];

// the slanted sheet lies behind the label so that the label stays upright
function Tab({ w, active = false, children }: { w: string; active?: boolean; children: React.ReactNode }) {
  return (
    <button className={`relative h-[43px] flex items-center ${w} ${active ? 'font-bold' : ''}`}>
      <span className={`absolute inset-y-0 left-0 right-0 border-r-2 border-b border-black -skew-x-6 ${active ? 'bg-white' : 'border-t'}`} />
      <span className="relative flex items-center">{children}</span>
    </button>
  );
}

function Inspector() {
  return (
    <aside className="w-[655px] shrink-0 bg-[#f0f0f0] flex flex-col font-['Liberation_Sans',sans-serif] text-black overflow-hidden">
      <div className="h-[57px] flex items-center justify-between pr-2 border-b-2 border-[#777] shrink-0">
        <h2 className="text-[27px] font-bold">Object Inspector</h2>
        <button aria-label="Close panel" className="w-[29px] h-[29px] bg-[#c4c4c4] flex items-center justify-center">
          <svg viewBox="0 0 20 20" className="w-5 h-5"><path d="M1 2l18 16M19 2L1 18" stroke="#777" strokeWidth="2.500" /></svg>
        </button>
      </div>
      <div className="h-[773px] mr-1.5 pr-2 border-r-2 border-b-2 border-[#777] flex flex-col shrink-0">
        <div className="h-[63px] flex items-center border-b-2 border-[#777]">
          <button aria-label="Structure" className="w-[44px] flex justify-center"><Ic n="shelf" c="w-10 h-10" /></button>
          <button aria-label="Filter" className="w-[60px] flex justify-center"><Ic n="filter" c="w-10 h-10" /></button>
          <button aria-label="Filter geometry" className="w-[44px] flex justify-center"><Ic n="filter2" c="w-10 h-10" /></button>
          <button aria-label="Find" className="w-[88px] flex justify-center"><Ic n="find" c="w-10 h-10" /></button>
          <button aria-label="Help" className="w-[36px] flex justify-center"><Ic n="help" c="w-10 h-10" /></button>
        </div>
        <div className="flex-1 bg-white border-r border-[#ccc] mb-4">
          <div className="flex h-[50px] text-[29px] leading-[52px]">
            <div className="w-[373px] pl-1 border-r border-[#ddd]">Objects</div>
            <div className="w-[188px] pl-2 border-r border-[#ddd]">Number of ...</div>
          </div>
          <div className="relative text-[30px]">
            <div className="absolute left-[18px] top-5 w-[46px] h-[161px] border-l border-b border-dotted border-black" />
            <div className="absolute left-[68px] top-9 w-px h-[112px] border-l border-dotted border-black" />
            <div className="flex items-center h-[42px] relative">
              <div className="pl-2"><Box /></div>
              <div className="w-[36px] border-t border-dotted border-black" />
              <span>Objects of a model</span>
            </div>
            {TREE.map((t) => (
              <div key={t.name} className="flex items-center h-[40px] relative pl-[58px]">
                <div className="-mt-3 flex items-center">
                  <Box plus />
                  <div className="w-[18px] border-t border-dotted border-black" />
                  <Ic n={t.icon} c="w-9 h-9" />
                </div>
                <span className={`w-[247px] pl-[11px] ${t.bold ? 'font-bold text-[29px]' : ''}`}>{t.name}</span>
                <span className={t.bold ? 'font-bold text-[29px]' : ''}>{t.num}</span>
              </div>
            ))}
            <div className="h-[40px] leading-[40px] pl-[67px]">Auxiliary objects</div>
          </div>
        </div>
      </div>
      <div className="h-[49px] flex shrink-0 text-[28px] font-['DejaVu_Sans',sans-serif] border-b-2 border-[#777]">
        <Tab w="w-[171px] pl-1" active>Geometry</Tab>
        <Tab w="w-[129px] pl-3">Groups</Tab>
      </div>
      <div className="flex-1 min-h-0 flex">
        <div className="w-[565px] bg-white overflow-hidden shrink-0">
          <table className="w-full table-fixed border-collapse text-[27px]">
            <colgroup><col className="w-[21px]" /><col className="w-[29px]" /><col className="w-[188px]" /><col className="w-[233px]" /><col className="w-[94px]" /></colgroup>
            <thead>
              <tr className="h-[46px] bg-[#c0c0c0] text-[29px]">
                <th className="border-r border-b border-[#666]" aria-label="Group" />
                <th colSpan={2} className="font-normal border border-[#666]">Name</th>
                <th className="font-normal border border-[#666]">Value</th>
                <th className="font-normal border border-[#666]">Unit</th>
              </tr>
              <tr className="h-[37px] leading-[36px] bg-[#dcdcdc] text-[29px]">
                <td colSpan={3} className="border-r border-b border-[#666] text-center">List of members</td>
                <td colSpan={2} className="border border-[#666] pl-[30px]">1to43By6 3to45By6</td>
              </tr>
            </thead>
            <tbody>
              {ROWS.map((r, i) => r.cat ? (
                <tr key={i} className="h-[37px] leading-[36px]">
                  <td className="p-0"><div className="-ml-1"><Box /></div></td>
                  <td colSpan={4} className="bg-[#aac7f2] border border-[#666] pl-1 text-[29px] p-0">{r.cat}</td>
                </tr>
              ) : (
                <tr key={i} className="h-[37px] leading-[36px]">
                  <td className="p-0" />
                  <td className="p-0 pl-0.5">{r.plus && <Box plus />}</td>
                  <td className={`border border-[#666] p-0 pl-[3px] whitespace-nowrap ${r.tint ? 'bg-[#bed5f4]' : ''} ${r.link ? 'text-[#00f]' : ''}`}>{r.name}</td>
                  <td className={`border border-[#666] p-0 text-right whitespace-nowrap ${r.tint ? 'bg-[#bed5f4]' : ''} ${r.blue ? 'text-[#00f]' : ''} ${r.name === 'Gamma' ? 'pr-11' : r.flush ? 'pr-0' : 'pr-1'}`}>{r.val}</td>
                  <td className={`border border-[#666] p-0 text-center ${r.tint ? 'bg-[#bed5f4]' : ''}`}>{r.help ? <Ic n="help" c="w-[35px] h-[35px] ml-auto mr-1.5" /> : r.unit}</td>
                </tr>
              ))}
            </tbody>
          </table>
        </div>
        <div className="w-[42px] ml-[42px] flex flex-col items-center">
          <div className="h-[43px] flex items-center"><Chevron c="" /></div>
          <div className="w-full h-[612px] bg-[#cdcdcd]" />
          <div className="mt-auto h-[44px] flex items-center"><Chevron c="rotate-180" /></div>
        </div>
      </div>
      <div className="h-[45px] shrink-0 flex border-t border-[#777] text-[29px] font-['DejaVu_Sans',sans-serif]">
        <Tab w="w-[194px] pl-1" active><Ic n="bar" c="w-8 h-8" />Members</Tab>
      </div>
      <div className="h-[47px] shrink-0 flex items-center border-b border-[#999]">
        {['tree', 'corner', 'tee', 'slabs'].map((n) => <button key={n} aria-label={n} className="w-[55px] h-[44px] border-r-2 border-b-2 border-black flex items-center justify-center"><Ic n={n} c="w-[42px] h-[34px]" fill /></button>)}
      </div>
    </aside>
  );
}

// axonometric projection of the hall: one bay moves by (DX, DY)
const DX = 109;
const DY = -64.6;
const at = (x: number, y: number, i: number): [number, number] => [x + DX * i, y + DY * i];
const roofY = (x: number) => (x < 1813 ? 1141 + (x - 1530) * 0.0777 : 1163 + (x - 1813) * 0.3163);
const LP = [1536, 1604, 1672, 1740, 1807];
const RP = [1820, 1888, 1955, 2023, 2090];
const BAYS = [0, 1, 2, 3, 4, 5, 6, 7];
const BRACED = [0, 3, 6];

function L({ a, b, s = '#1b5426', w = 1.4 }: { a: [number, number]; b: [number, number]; s?: string; w?: number }) {
  return <line x1={a[0]} y1={a[1]} x2={b[0]} y2={b[1]} stroke={s} strokeWidth={w} />;
}

function Foot({ p }: { p: [number, number] }) {
  return (
    <g transform={`translate(${p[0]} ${p[1]})`} stroke="#0f4a94" strokeWidth="1.300">
      <path d="M-19 31L-7 18H4L19 30v9L5 45l-24-4z" fill="#6fa5de" />
      <path d="M-19 31l24 4 14-5M5 35v10M5 35L2 18" fill="none" />
      <circle cy="14" r="6" fill="#4b8acb" />
      <path d="M-6 14H6M0 8v12" />
    </g>
  );
}

function Gable({ i }: { i: number }) {
  return (
    <g>
      {([[1656, 1404], [1813, 1435], [1970, 1466]] as [number, number][]).map(([x, y]) => (
        <g key={x}><L a={at(x, roofY(x), i)} b={at(x, y + 8, i)} /><Foot p={at(x, y, i)} /></g>
      ))}
      <L a={at(1530, 1220, i)} b={at(2096, 1331, i)} />
      <L a={at(1530, 1296, i)} b={at(2096, 1407, i)} />
      <L a={at(1530, 1220, i)} b={at(1656, 1321, i)} />
      <L a={at(1530, 1296, i)} b={at(1656, 1244, i)} />
      <L a={at(1970, 1306, i)} b={at(2096, 1407, i)} />
      <L a={at(1970, 1383, i)} b={at(2096, 1331, i)} />
    </g>
  );
}

function Side({ x, top, base }: { x: number; top: number; base: number }) {
  return (
    <g>
      {BRACED.map((i) => <g key={i}><L a={at(x, top, i)} b={at(x, base, i + 1)} /><L a={at(x, base, i)} b={at(x, top, i + 1)} /></g>)}
      {[...BAYS].reverse().map((i) => <g key={i}><L a={at(x, top, i)} b={at(x, base + 10, i)} s="#0a0af0" w={2.4} /><Foot p={at(x, base, i)} /></g>)}
    </g>
  );
}

function Roof() {
  const P = (k: number, i: number) => at(LP[k], roofY(LP[k]), i);
  const S = (k: number, i: number) => at(RP[k], roofY(RP[k]), i);
  return (
    <g>
      <path d="M1530 1141L1813 1163L2576 711L2293 689z" fill="#b5c0d4" />
      <path d="M1813 1163L2096 1252L2859 800L2576 711z" fill="#c1cce0" />
      <path d="M1560 1135L1806 1154L2546 716L2301 697zM1844 1162L2087 1239L2826 801L2584 724z" fill="none" stroke="#8c8428" strokeWidth="1.300" />
      {LP.concat(RP).map((x) => <L key={x} a={at(x, roofY(x), 0)} b={at(x, roofY(x), 7)} />)}
      {BAYS.map((i) => <g key={i}><L a={at(1530, 1141, i)} b={at(1813, 1163, i)} /><L a={at(1813, 1163, i)} b={at(2096, 1252, i)} /></g>)}
      {BRACED.map((i) => (
        <g key={i}>
          <L a={P(0, i)} b={P(2, i + 1)} /><L a={P(2, i)} b={P(0, i + 1)} />
          <L a={P(2, i)} b={P(3, i + 1)} /><L a={P(3, i)} b={P(2, i + 1)} />
          <L a={P(3, i)} b={P(4, i + 1)} /><L a={P(4, i)} b={P(3, i + 1)} />
          <L a={S(0, i)} b={S(1, i + 1)} /><L a={S(1, i)} b={S(0, i + 1)} />
          <L a={S(1, i)} b={S(2, i + 1)} /><L a={S(2, i)} b={S(1, i + 1)} />
          <L a={S(2, i)} b={S(4, i + 1)} /><L a={S(4, i)} b={S(2, i + 1)} />
        </g>
      ))}
      {[[1530, 1141], [1813, 1163], [2096, 1252]].map(([x, y]) => <L key={x} a={at(x, y, 0)} b={at(x, y, 7)} s="#222" w={1.5} />)}
      {BAYS.map((i) => [[1530, 1141], [2096, 1252]].map(([x, y]) => {
        const t = at(x, y - 28, i);
        return <g key={`${x}${i}`}><L a={at(x, y, i)} b={t} /><circle cx={t[0]} cy={t[1]} r="1.500" fill="#f22" /></g>;
      }))}
    </g>
  );
}

function Canvas() {
  return (
    <div className="relative flex-1 min-w-0 bg-linear-to-b from-[#e3f7ff] via-[#cbe0f4] to-[#b2c8e8] border-l-2 border-b-2 border-r border-[#666]">
      <svg viewBox="657 237 3076 1687" className="absolute inset-0 w-full h-full">
        <Gable i={7} />
        <Side x={1530} top={1141} base={1383} />
        <Roof />
        <Gable i={0} />
        <Side x={2096} top={1252} base={1494} />
        <g>
          <ellipse cx="3622" cy="402" rx="84" ry="34" fill="url(#gS)" />
          <path d="M3555 303L3610 283L3690 294L3646 317z" fill="#e3ecf5" />
          <path d="M3555 303L3646 317L3644 417L3560 393z" fill="#d8e2ee" />
          <path d="M3646 317L3690 294L3686 381L3644 417z" fill="#ccd7e3" />
          <path d="M3555 303L3610 283L3690 294L3646 317zM3646 317L3644 417L3560 393L3555 303M3690 294L3686 381L3644 417" fill="none" stroke="#97a1a8" strokeWidth="2" strokeDasharray="16 7" />
          <g fill="#8d979b" fontFamily="Open Sans, sans-serif" fontWeight="700" textAnchor="middle">
            <text x="3601" y="367" fontSize="21" transform="rotate(7 3601 360)">FRONT</text>
            <text x="3667" y="358" fontSize="14" transform="rotate(-30 3667 353)">RIGHT</text>
            <text x="3626" y="302" fontSize="14" transform="rotate(8 3626 298)">TOP</text>
          </g>
        </g>
      </svg>
      <div className="absolute left-0 bottom-0 w-[240px] h-[240px] border-t border-l border-t-white border-l-white border-r-2 border-b-2 border-r-[#444] border-b-[#444]">
        <svg viewBox="657 1686 238 238" className="w-full h-full">
          <path d="M749 1830V1775" stroke="#ee2222" strokeWidth="9" /><path d="M736 1790l13-38 13 38z" fill="#ee2222" />
          <path d="M749 1832l26-16" stroke="#2a6b3a" strokeWidth="7" /><path d="M770 1811l24-7-14 20z" fill="#2a6b3a" />
          <path d="M749 1834l46 6" stroke="#2222ee" strokeWidth="8" /><path d="M793 1829l33 16-36 8z" fill="#2222ee" />
          <g fontFamily="Liberation Sans, sans-serif" fontSize="35"><text x="750" y="1749" fill="#ee2222">Z</text><text x="795" y="1807" fill="#1c5a2c">Y</text><text x="828" y="1849" fill="#1414f0">X</text></g>
        </svg>
      </div>
      <div className="absolute left-[957px] bottom-0 w-[954px] h-[47px] bg-linear-to-b from-white to-[#d4d4d4] flex items-center text-[28px] text-black">
        <button className="w-[204px] h-full border-r border-[#9bb]">3D</button>
        <button className="flex-1 h-full text-left pl-2.5">Z = 0.00 m</button>
        <button aria-label="Up" className="w-[50px] h-full border-l-2 border-[#888] flex items-center justify-center"><svg viewBox="0 0 22 14" className="w-[22px] h-[14px]"><path d="M0 14L11 0l11 14z" fill="#555" /></svg></button>
        <button aria-label="Down" className="w-[50px] h-full border-l-2 border-[#888] flex items-center justify-center"><svg viewBox="0 0 22 14" className="w-[22px] h-[14px]"><path d="M0 0h22L11 14z" fill="#555" /></svg></button>
      </div>
      <button className="absolute right-0 bottom-0 w-[286px] h-[47px] bg-[#bfd3ec] text-[28px] text-[#8496a8]">View</button>
    </div>
  );
}

const TOGGLES = ['nNode', 'nBar', 'n12', 'tri', 'ell', 'local', 'plate', 'loads', 'n123', 'swap'];
const ACTIVE = ['tri', 'plate', 'swap'];
const SIDE = [
  ['axes', 'truss', 'poly', 'redCube', 'column', 'node', 'bar'],
  ['slab', 'thick', 'slabAxes', 'panel'],
  ['beam', 'stack', 'support', 'release'],
  ['load1', 'load2', 'wizard', 'comb'],
  ['table'],
  ['solid'],
];

function Viewport() {
  return (
    <main className="flex-1 min-w-0 flex flex-col bg-[#f0f0f0]">
      <div className="flex-1 min-h-0 flex">
        <Canvas />
        <div className="w-[43px] flex flex-col items-center justify-between relative">
          <div className="h-[42px] flex items-center"><Chevron c="" /></div>
          <div className="absolute top-[38.500%] left-0 w-full h-[387px] bg-[#cdcdcd]" />
          <div className="h-[42px] flex items-center"><Chevron c="rotate-180" /></div>
        </div>
      </div>
      <div className="h-[43px] shrink-0 flex items-center border-b border-[#ccc]">
        <div className="flex gap-[3px] pl-[2px]">
          {TOGGLES.map((n) => <button key={n} aria-label={n} className={`w-[62px] h-[41px] border-2 flex items-center justify-center ${ACTIVE.includes(n) ? 'border-[#1f5a9a]' : 'border-[#bbb]'}`}><Ic n={n} c="w-[56px] h-[37px]" fill /></button>)}
        </div>
        <div className="w-[60px] flex justify-center"><Chevron c="-rotate-90" /></div>
        <div className="flex-1 h-full flex justify-center"><div className="w-[933px] h-full bg-[#cdcdcd]" /></div>
        <div className="w-[60px] flex justify-center"><Chevron c="rotate-90" /></div>
        <div className="flex gap-[3px] pr-[45px]">
          {['crossWave', 'wave', 'eye'].map((n) => <button key={n} aria-label={n} className="w-[62px] h-[41px] border-2 border-[#bbb] flex items-center justify-center"><Ic n={n} c="w-[56px] h-[37px]" fill /></button>)}
        </div>
      </div>
    </main>
  );
}

function StatusBar() {
  return (
    <footer className="shrink-0 bg-[#f0f0f0] text-black text-[28px]">
      <div className="h-[40px] border-y-2 border-[#d4d4d4]">
        <button className="h-[34px] w-[73px] bg-white text-left text-[26px] leading-[34px]">View</button>
      </div>
      <div className="h-[50px] flex items-center [&>*]:h-full">
        <div className="flex">
          {['snap', 'vQ', 'four', 'crossWave', 'wire', 'shade', 'white'].map((n) => <button key={n} aria-label={n} className="w-[46px] h-full border-r border-[#ddd] flex items-center justify-center"><Ic n={n} c="w-[34px] h-[36px]" /></button>)}
        </div>
        <div className="flex-1 flex items-center justify-end gap-4 pr-[191px] border-r border-[#d0d0d0]">
          <svg viewBox="0 0 30 30" className="w-[30px] h-[30px]"><circle cx="15" cy="15" r="13.500" fill="#12f312" stroke="#888" strokeWidth="2" /><path d="M17 5c4 1 7 4 8 8" stroke="#bfffbf" strokeWidth="3" fill="none" /></svg>
          <span>Results (FEM): available</span>
        </div>
        <div className="w-[90px] border-r border-[#d0d0d0]" />
        <div className="w-[125px] border-r border-[#d0d0d0] pl-2 flex items-center">219</div>
        <div className="w-[58px] border-r border-[#d0d0d0] flex items-center justify-center"><Ic n="a1" c="w-8 h-8" /></div>
        <div className="w-[126px] border-r border-[#d0d0d0] pl-2 flex items-center">1014</div>
        <div className="w-[379px] border-r border-[#d0d0d0] pl-3 flex items-center">IPE 240</div>
        <div className="w-[495px] border-r border-[#d0d0d0] pl-2 flex items-center gap-[18px]"><Ic n="coord" c="w-9 h-9" />x=0.00, y=0.00, z=0.00</div>
        <div className="w-[245px] border-r border-[#d0d0d0] pl-2 flex items-center gap-6"><Ic n="dim" c="w-9 h-9" />0</div>
        <div className="w-[224px] border-r border-[#d0d0d0] pl-2 flex items-center whitespace-nowrap">[m] [kN] [Deg]</div>
        <div className="w-[10px]" />
      </div>
    </footer>
  );
}

function Slot({ label, run = false, on = false, children }: { label: string; run?: boolean; on?: boolean; children: React.ReactNode }) {
  return (
    <button aria-label={label} className={`relative w-[124px] h-full flex items-center justify-center ${on ? 'bg-[#4a4644]' : ''}`}>
      {children}
      {run && <span className={`absolute bottom-0 h-[5px] bg-[#76b5f0] ${on ? 'w-full' : 'w-[100px]'}`} />}
    </button>
  );
}

function Tray({ label, children }: { label: string; children: React.ReactNode }) {
  return (
    <button aria-label={label} className="w-20 h-full flex items-center justify-center">
      <svg viewBox="0 0 40 40" className="w-10 h-10" fill="none" stroke="#fff" strokeWidth="2.500">{children}</svg>
    </button>
  );
}

function Taskbar() {
  return (
    <div className="h-[100px] shrink-0 bg-[#201f1e] flex items-center text-white">
      <button aria-label="Start" className="w-[120px] flex justify-center">
        <svg viewBox="0 0 40 40" className="w-10 h-10"><path d="M0 6l16-3v16H0zM18 2l22-2v19H18zM0 21h16v16L0 34zM18 21h22v19l-22-3z" fill="#fff" /></svg>
      </button>
      <label className="w-[860px] h-[97px] bg-[#333] border-2 border-[#5c5c5c] flex items-center pl-[28px]">
        <svg viewBox="0 0 50 50" className="w-[50px] h-[50px]" fill="none" stroke="#fff" strokeWidth="3"><circle cx="31" cy="18" r="15" /><path d="M20 29L2 48" /></svg>
        <input aria-label="Search" placeholder="Type here to search" className="ml-[32px] w-[600px] bg-transparent text-[35px] placeholder:text-[#ccc] outline-none" />
      </label>
      <Slot label="Cortana"><svg viewBox="0 0 40 40" className="w-10 h-10"><circle cx="20" cy="20" r="17" fill="none" stroke="#fff" strokeWidth="4.500" /></svg></Slot>
      <Slot label="Task view"><svg viewBox="0 0 42 40" className="w-[42px] h-10" fill="none" stroke="#fff" strokeWidth="2.500"><path d="M2 1v7h24V1M2 12h24v16H2zM2 39v-7h24v7M37 1v9M37 21v18" /><circle cx="37" cy="16" r="2.500" fill="#fff" /></svg></Slot>
      <Slot label="AutoCAD"><span className="w-[60px] h-[60px] bg-[#f6f0e8] flex items-center justify-center"><svg viewBox="0 0 44 48" className="w-11 h-12"><path d="M0 46L17 1h9l18 45H33l-3-9H14l4-9h10L22 12 10 46z" fill="#c4201c" /><path d="M14 37l4-9h10l3 9z" fill="#8a2a1c" /></svg></span></Slot>
      <Slot label="Mail">
        <svg viewBox="0 0 66 60" className="w-[66px] h-[60px]"><path d="M0 20L32 0l34 20v36H0z" fill="#1f62b0" /><path d="M4 18h58v20H4z" fill="#f4f4f4" /><path d="M0 19l33 22 33-22v38H0z" fill="#2a90e6" /><path d="M66 19v38L33 38z" fill="#1bb0f4" /></svg>
        <span className="absolute left-[72px] top-[48px] w-[42px] h-[42px] rounded-full bg-[#2b2b2b] border-2 border-[#999] text-[26px] leading-[38px] text-center">4</span>
      </Slot>
      <Slot label="File Explorer" run><svg viewBox="0 0 54 46" className="w-[54px] h-[46px]"><path d="M1 1h22l4 5h26v37H1z" fill="#e8a825" /><path d="M1 10h25l3-4h24v37H1z" fill="#fdd36c" /><path d="M10 46V24h36v22h-8V35H18v11z" fill="#3f94e0" /></svg></Slot>
      <Slot label="Store"><svg viewBox="0 0 60 60" className="w-[60px] h-[60px]"><path d="M15 18V2h30v16" fill="none" stroke="#eee" strokeWidth="4" /><path d="M0 16h60v43H0z" fill="#f2f2f2" /><path d="M19 29h10v10H19z" fill="#f04848" /><path d="M31 29h10v10H31z" fill="#7a9a10" /><path d="M19 41h10v10H19z" fill="#2a98e8" /><path d="M31 41h10v10H31z" fill="#e8b010" /></svg></Slot>
      <Slot label="Chrome" run><svg viewBox="0 0 56 56" className="w-14 h-14"><circle cx="28" cy="28" r="28" fill="#fcc934" /><path d="M28 28L3.700 14A28 28 0 0 1 52.300 14z" fill="#ea4335" /><path d="M28 28L3.700 14A28 28 0 0 0 28 56l12-21z" fill="#34a853" /><path d="M28 14h24.300A28 28 0 0 0 3.700 14L16 35z" fill="#ea4335" /><circle cx="28" cy="28" r="13" fill="#fff" /><circle cx="28" cy="28" r="10" fill="#2f7ded" /></svg></Slot>
      <Slot label="Robot" run on><span className="w-[60px] h-[60px] bg-[#fff1d4] flex flex-col items-center"><span className="text-[44px] leading-[46px] font-bold text-[#e8a21c]">R</span><span className="text-[11px] leading-[12px] font-bold text-[#e8a21c] self-end pr-2">PRO</span></span></Slot>
      <button className="ml-auto flex items-center text-[33px] whitespace-nowrap w-[399px] shrink-0">
        <svg viewBox="0 0 50 50" className="w-[50px] h-[50px] mr-[22px]"><circle cx="24" cy="24" r="23" fill="#f3b83a" /><path d="M26 44c-8-1-8-11 0-12 1-11 15-10 16-1 8 1 9 12 0 13z" fill="#cfe8f8" /></svg>
        <span>31°C</span><span className="ml-[20px]">Mostly sunny</span>
      </button>
      <Tray label="Hidden icons"><path d="M5 27l15-14 15 14" /></Tray>
      <Tray label="Meet now"><path d="M8 13h17v16H8zM25 18l9-4v14l-9-4M11 8c5-4 12-4 17 0M11 34c5 3 12 3 17 0" /></Tray>
      <Tray label="OneDrive"><path d="M9 32c-12-2-8-15 1-14C14 6 29 7 30 18c12 0 11 14 2 14z" fill="#fff" stroke="none" /><path d="M10 18C14 6 29 7 30 18l-10 6z" fill="#b5b5b5" stroke="none" /></Tray>
      <Tray label="Battery"><path d="M3 10h31v20H3z" /><path d="M9 14h18v12H9z" fill="#fff" /><path d="M37 16v8" /></Tray>
      <Tray label="Wi-Fi"><path d="M5 36C6 18 18 6 35 5M13 36c0-13 9-21 22-22M21 36c0-8 6-13 14-14" /><circle cx="32" cy="33" r="3" fill="#fff" stroke="none" /></Tray>
      <Tray label="Volume"><path d="M1 15h7l8-8v26l-8-8H1zM21 14c3 4 3 8 0 12M27 10c5 6 5 14 0 20M33 6c7 8 7 20 0 28" /></Tray>
      <div className="pl-2"><Tray label="Pen"><path d="M15 28L30 3c4-1 6 1 5 4L20 31l-7 5zM12 20C2 22 0 34 6 38c5 1 7-3 8-6M24 26c8 0 12-2 16-10l-5-1" /></Tray></div>
      <button className="w-[122px] text-[28px]">ENG</button>
      <button className="w-[130px] text-[28px] leading-[46px] whitespace-nowrap flex flex-col items-center"><span>1:04 PM</span><span>7/17/2021</span></button>
      <button aria-label="Notifications" className="w-[140px] flex justify-center"><svg viewBox="0 0 42 40" className="w-[42px] h-10" fill="none" stroke="#fff" strokeWidth="3"><path d="M2 2h38v31H27l-6 6v-6H2z" /></svg></button>
      <button aria-label="Show desktop" className="w-[12px] h-full border-l-2 border-[#777]" />
    </div>
  );
}

function Gradients() {
  return (
    <svg className="absolute w-0 h-0" aria-hidden="true">
      <defs>
        <linearGradient id="gB" x1="0" y1="0" x2="1" y2="1"><stop offset=".3" stopColor="#fff" /><stop offset="1" stopColor="#7fc0f8" /></linearGradient>
        <linearGradient id="gR" x1="0" y1="0" x2="1" y2="1"><stop offset="0" stopColor="#f8aaa4" /><stop offset="1" stopColor="#e2262a" /></linearGradient>
        <linearGradient id="gY" x1="0" y1="0" x2="1" y2="1"><stop offset="0" stopColor="#fdeecb" /><stop offset="1" stopColor="#eba33a" /></linearGradient>
        <linearGradient id="gW" x1="0" y1="0" x2="1" y2="0"><stop offset="0" stopColor="#a8742c" /><stop offset=".5" stopColor="#fbe0b0" /><stop offset="1" stopColor="#a8742c" /></linearGradient>
        <linearGradient id="gQ" x1="0" y1="0" x2="0" y2="1"><stop offset="0" stopColor="#8fb8e4" /><stop offset=".5" stopColor="#2b62b8" /><stop offset="1" stopColor="#5da4e4" /></linearGradient>
        <radialGradient id="gS"><stop offset=".4" stopColor="#8fa3b0" /><stop offset="1" stopColor="#8fa3b0" stopOpacity="0" /></radialGradient>
      </defs>
    </svg>
  );
}

export default function App() {
  return (
    <div className="relative w-full h-screen overflow-hidden flex flex-col bg-white font-['Open_Sans','Noto_Sans',sans-serif]">
      <Gradients />
      <TitleBar />
      <Toolbars />
      <div className="flex-1 min-h-0 flex relative">
        <Inspector />
        <Viewport />
        <div className="w-[62px] shrink-0">
          <div className="bg-[#f0f0f0] border-l border-b border-[#999] pt-1 pb-1 flex flex-col items-center gap-[6px]">
            {SIDE.map((g) => <div key={g[0]}>{g.map((n) => <button key={n} aria-label={n} className="w-[62px] h-[62px] flex items-center justify-center"><Ic n={n} c="w-[58px] h-[52px]" fill /></button>)}</div>)}
          </div>
        </div>
        <div role="tooltip" className="absolute right-0.5 top-[1158px] h-[46px] px-1 bg-white border border-[#767676] shadow-md text-[28px] leading-[44px] text-[#575757] whitespace-nowrap">Rotate 2D. Press left mouse button and rotate the structure view.</div>
      </div>
      <StatusBar />
      <Taskbar />
      <div className="absolute left-[44%] bottom-[48px] w-[460px] text-center text-[#b4b4b4]/50 font-bold pointer-events-none flex flex-col items-center">
        <span lang="ar" dir="rtl" className="font-['DejaVu_Sans',sans-serif] text-[130px] leading-[140px] whitespace-nowrap">مستقل</span>
        <span className="text-[74px] leading-[74px] font-semibold">mostaql.com</span>
      </div>
    </div>
  );
}
